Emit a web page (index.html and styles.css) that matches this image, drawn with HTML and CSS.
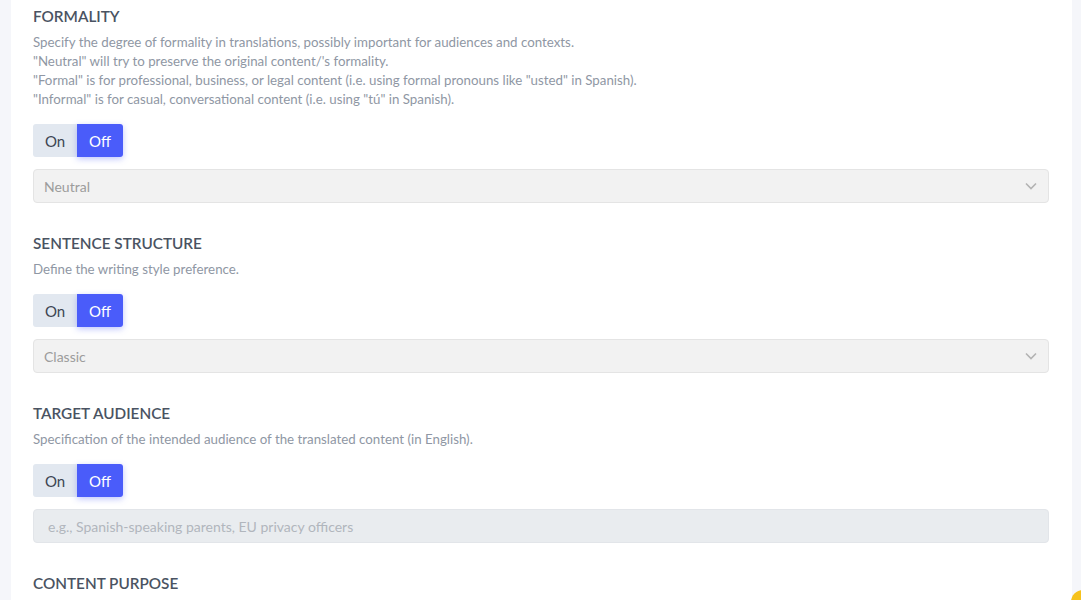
FILE: index.html
```html
<!DOCTYPE html>
<html>

<head>
    <meta charset="utf-8" />
    <title>Translation Settings</title>
    <meta name="viewport" content="width=device-width, initial-scale=1">
    <link rel="stylesheet" href="styles.css">
</head>

<body>

    <div class="panel">

        <div class="setting">
            <h3 class="setting-title">FORMALITY</h3>
            <div class="setting-desc">
                <div>Specify the degree of formality in translations, possibly important for audiences and contexts.</div>
                <div>"Neutral" will try to preserve the original content/'s formality.</div>
                <div>"Formal" is for professional, business, or legal content (i.e. using formal pronouns like "usted" in Spanish).</div>
                <div>"Informal" is for casual, conversational content (i.e. using "tú" in Spanish).</div>
            </div>
            <div class="toggle">
                <button class="toggle-btn">On</button>
                <button class="toggle-btn active">Off</button>
            </div>
            <div class="select">
                <span>Neutral</span>
                <svg class="chevron" width="12" height="8" viewBox="0 0 12 8">
                    <path d="M1 1.5 L6 6.5 L11 1.5" fill="none" stroke="#b3b3b3" stroke-width="1.6" />
                </svg>
            </div>
        </div>

        <div class="setting">
            <h3 class="setting-title">SENTENCE STRUCTURE</h3>
            <div class="setting-desc">
                <div>Define the writing style preference.</div>
            </div>
            <div class="toggle">
                <button class="toggle-btn">On</button>
                <button class="toggle-btn active">Off</button>
            </div>
            <div class="select">
                <span>Classic</span>
                <svg class="chevron" width="12" height="8" viewBox="0 0 12 8">
                    <path d="M1 1.5 L6 6.5 L11 1.5" fill="none" stroke="#b3b3b3" stroke-width="1.6" />
                </svg>
            </div>
        </div>

        <div class="setting">
            <h3 class="setting-title">TARGET AUDIENCE</h3>
            <div class="setting-desc">
                <div>Specification of the intended audience of the translated content (in English).</div>
            </div>
            <div class="toggle">
                <button class="toggle-btn">On</button>
                <button class="toggle-btn active">Off</button>
            </div>
            <input class="text-input" type="text" placeholder="e.g., Spanish-speaking parents, EU privacy officers" disabled>
        </div>

        <div class="setting">
            <h3 class="setting-title">CONTENT PURPOSE</h3>
        </div>

    </div>

    <div class="help-bubble"></div>

</body>

</html>
```

FILE: styles.css
```css
body {
    margin: 0;
    background-color: #f5f6fa;
    font-family: 'Lato', sans-serif;
    overflow: hidden;
}

.panel {
    background-color: #fff;
    margin: 0 9px 0 11px;
    padding: 6px 23px 0 22px;
    min-height: 600px;
}

.setting {
    margin-bottom: 30px;
}

.setting-title {
    margin: 0;
    font-size: 15.3px;
    font-weight: 600;
    color: #4a5362;
    line-height: 20px;
}

.setting-desc {
    margin-top: 7px;
    font-size: 13.3px;
    line-height: 19px;
    color: #8f97a4;
}

.toggle {
    display: flex;
    margin-top: 15px;
}

.toggle-btn {
    font-family: inherit;
    font-size: 15px;
    height: 33px;
    border: 0;
    padding: 0;
    outline: 0;
    cursor: pointer;
    background-color: #e2e8f0;
    color: #3c4552;
    width: 44px;
    border-radius: 3px 0 0 3px;
}

.toggle-btn.active {
    background-color: #4a5cfa;
    color: #fff;
    width: 46px;
    border-radius: 0 3px 3px 0;
    box-shadow: 0 2px 6px rgba(74, 92, 250, 0.35);
}

.select {
    margin-top: 12px;
    height: 34px;
    box-sizing: border-box;
    display: flex;
    align-items: center;
    justify-content: space-between;
    padding: 0 11px 0 10px;
    background-color: #f2f2f2;
    border: 1px solid #e4e4e4;
    border-radius: 4px;
    font-size: 14px;
    color: #9c9c9c;
}

.text-input {
    display: block;
    margin-top: 12px;
    width: 100%;
    height: 34px;
    box-sizing: border-box;
    padding: 0 14px;
    background-color: #e9ecef;
    border: 1px solid #e2e5e9;
    border-radius: 4px;
    font-family: inherit;
    font-size: 14px;
    outline: 0;
}

.text-input::placeholder {
    color: #b1b6bd;
}

.help-bubble {
    position: fixed;
    right: -14px;
    bottom: -14px;
    width: 24px;
    height: 24px;
    border-radius: 50%;
    background-color: #f6c21c;
}
```
